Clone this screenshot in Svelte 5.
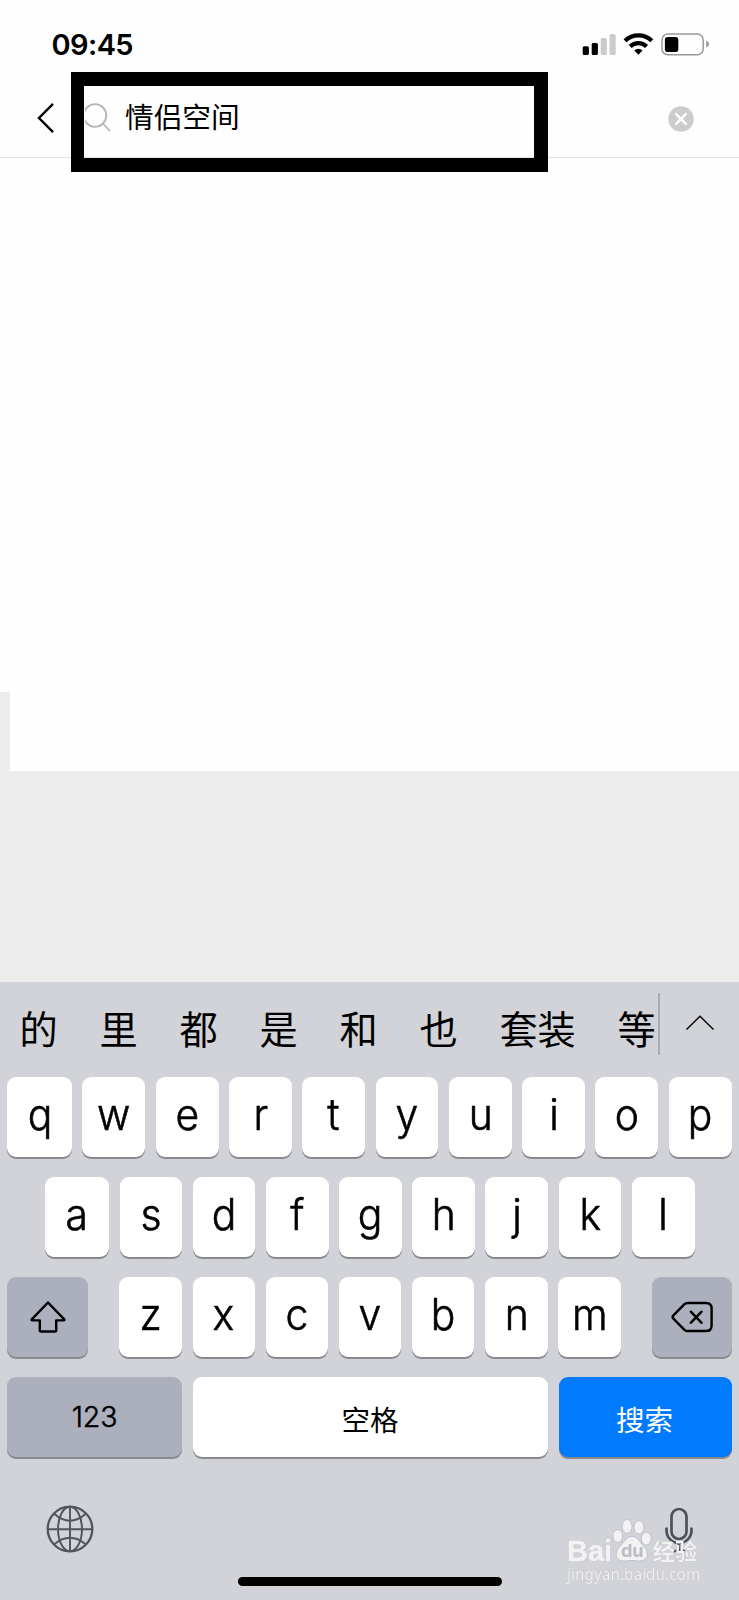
<script>
  const candidates = ['的', '里', '都', '是', '和', '也', '套装', '等'];
  const topRow = [...'qwertyuiop'];
  const midRow = [...'asdfghjkl'];
  const lowRow = [...'zxcvbnm'];
</script>

<div class="screen">
  <header class="status">
    <span class="time">09:45</span>
    <svg class="signals" width="128" height="24" viewBox="0 0 128 24">
      <g>
        <rect x="0.7" y="13.3" width="6.2" height="8.6" rx="1.5" />
        <rect x="9.7" y="10" width="6.2" height="11.9" rx="1.5" />
        <rect x="18.7" y="5" width="6.2" height="16.9" rx="1.5" fill="#ccc" />
        <rect x="27.5" y="1" width="6.2" height="20.9" rx="1.5" fill="#ccc" />
      </g>
      <g fill="none" stroke="#000" stroke-width="4.2">
        <path d="M43 7.8 A19.4 19.4 0 0 1 69.8 7.8" />
        <path d="M48.2 13.4 A11.9 11.9 0 0 1 64.6 13.4" />
      </g>
      <path d="M52.3 17.4 A6.2 6.2 0 0 1 60.5 17.4 L56.4 21.7 Z" />
      <rect x="80" y="1.1" width="41.2" height="20.6" rx="5.8" fill="none" stroke="#999" stroke-width="1.5" />
      <rect x="82.9" y="3.9" width="13.4" height="15.2" rx="2.8" />
      <path d="M124.2 7.6 Q127 8.7 127 11.2 Q127 13.7 124.2 14.8 Z" fill="#999" />
    </svg>
  </header>

  <div class="searchbar">
    <svg class="back" width="18" height="32" viewBox="0 0 18 32">
      <path d="M16 1.8 L2 16 L16 30.2" fill="none" stroke="#000" stroke-width="2.4" />
    </svg>
    <div class="field">
      <svg class="lens" width="28" height="30" viewBox="0 0 28 30">
        <circle cx="10" cy="12.5" r="11.3" />
        <path d="M17.8 20.5 L25 28" />
      </svg>
      <span class="query">情侣空间</span>
    </div>
    <svg class="clear" width="26" height="26" viewBox="0 0 26 26">
      <circle cx="13" cy="13" r="12.7" fill="#ccc" />
      <path d="M8.2 8.2 L17.8 17.8 M17.8 8.2 L8.2 17.8" stroke="#fff" stroke-width="2.6" stroke-linecap="round" />
    </svg>
  </div>

  <main class="results"></main>
  <div class="strip"></div>
  <div class="backdrop"></div>

  <section class="keyboard">
    <div class="candidates">
      <div class="words">
        {#each candidates as word}<span>{word}</span>{/each}
      </div>
      <div class="expand">
        <svg width="30" height="18" viewBox="0 0 30 18">
          <path d="M1.5 15.5 L15 2.3 L28.5 15.5" fill="none" stroke="#111" stroke-width="1.6" />
        </svg>
      </div>
    </div>

    <div class="row top">
      {#each topRow as letter}<div class="key"><span>{letter}</span></div>{/each}
    </div>
    <div class="row mid">
      {#each midRow as letter}<div class="key"><span>{letter}</span></div>{/each}
    </div>
    <div class="row low">
      <div class="key dark">
        <svg class="shift" width="38" height="34" viewBox="0 0 38 34">
          <path d="M19 2.5 L35.3 19.3 Q35.8 20.4 34.6 20.4 H27.2 V30.2 Q27.2 31.5 25.9 31.5 H12.1 Q10.8 31.5 10.8 30.2 V20.4 H3.4 Q2.2 20.4 2.7 19.3 Z" fill="none" stroke="#000" stroke-width="2.4" stroke-linejoin="round" />
        </svg>
      </div>
      <div class="letters">
        {#each lowRow as letter}<div class="key"><span>{letter}</span></div>{/each}
      </div>
      <div class="key dark">
        <svg width="44" height="34" viewBox="0 0 44 34">
          <g fill="none" stroke="#000" stroke-width="2.4" stroke-linejoin="round" stroke-linecap="round">
            <path d="M17.5 3 H36 Q41.6 3 41.6 8.6 V25.4 Q41.6 31 36 31 H17.5 Q15.8 31 14.5 29.8 L3.4 18.7 Q1.8 17 3.4 15.3 L14.5 4.2 Q15.8 3 17.5 3 Z" />
            <path d="M20.8 11.7 L31.6 22.8 M31.6 11.7 L20.8 22.8" />
          </g>
        </svg>
      </div>
    </div>
    <div class="row bottom">
      <div class="key dark digits"><span>123</span></div>
      <div class="key label"><span>空格</span></div>
      <div class="key label search"><span>搜索</span></div>
    </div>

    <div class="tools">
      <svg width="48" height="48" viewBox="0 0 48 48" fill="none" stroke="#50555c" stroke-width="1.9">
        <circle cx="24" cy="24" r="22.3" stroke-width="2.3" />
        <path d="M24 1.5 V46.5 M1.5 24.3 H46.5" />
        <ellipse cx="24" cy="24" rx="12" ry="22.3" />
        <path d="M8.5 9 Q24 22.5 39.5 9 M8.5 39 Q24 26.5 39.5 39" />
      </svg>
      <svg width="28" height="46" viewBox="0 0 28 46" fill="none" stroke="#4c515b" stroke-width="2.7">
        <rect x="6.5" y="2" width="15" height="30" rx="7.5" />
        <path d="M1.5 20.5 V23.5 A12.5 12.5 0 0 0 26.5 23.5 V20.5 M14 36 V43.5 M8 44 H20" />
      </svg>
    </div>
    <div class="home"></div>
  </section>

  <div class="watermark">
    <div class="brand">
      <span class="bai">Bai</span>
      <span class="paw">
        <svg width="40" height="43" viewBox="0 0 40 43" fill="#f2f2f3" stroke="#b8b9c0" stroke-width="0.8">
          <ellipse cx="5.7" cy="17" rx="4.9" ry="6.4" />
          <ellipse cx="15" cy="7.5" rx="5" ry="6.9" />
          <ellipse cx="27" cy="8.3" rx="5" ry="6.7" />
          <ellipse cx="34.3" cy="19.6" rx="5" ry="6.4" />
          <path d="M20 17.5 C26 17.5 27.5 23 31.5 27 C37.5 32.5 36.5 42 28 42 C24 42 23 41.6 20 41.6 C17 41.6 15 42 11.5 42 C2.5 42 2.5 32.5 7.5 28 C12 24 13.5 17.5 20 17.5 Z" />
        </svg>
        <span class="du">du</span>
      </span>
      <span class="jingyan">经验</span>
    </div>
    <div class="url">jingyan.baidu.com</div>
  </div>
</div>

<style>
  :global(body) { margin: 0; background: #fff; }
  .screen {
    position: relative;
    display: flex;
    flex-direction: column;
    width: 739px;
    height: 1600px;
    overflow: hidden;
    background: #fefefe;
    color: #000;
    font-family: Inter, "Noto Sans CJK SC", sans-serif;
  }
  svg { display: block; flex: none; }
  .status {
    display: flex;
    justify-content: space-between;
    align-items: flex-start;
    height: 72px;
    box-sizing: border-box;
    padding: 33px 29px 0 51.5px;
  }
  .time { font-size: 29px; line-height: 24px; font-weight: 600; letter-spacing: -0.6px; }
  .searchbar {
    display: flex;
    align-items: flex-start;
    height: 86px;
    box-sizing: border-box;
    border-bottom: 1px solid #e2e2e2;
  }
  .back { margin: 30px 16px 0 37px; }
  .field {
    display: flex;
    box-sizing: border-box;
    width: 477px;
    height: 100.4px;
    border: 14px solid #000;
    border-width: 14px 14px 14px 13px;
    background: linear-gradient(#fefefe 71px, #e2e2e2 71px);
  }
  .lens { margin: 17px 0 0 1px; fill: none; stroke: #b5b5b5; stroke-width: 1.8; }
  .query {
    margin: 9px 0 0 12px;
    font: 400 28.7px/42px "Noto Sans CJK SC", sans-serif;
  }
  .clear { margin: 34px 0 0 119.5px; }
  .results { height: 534px; }
  .strip { height: 78.5px; box-sizing: border-box; border-left: 10px solid #ececec; }
  .backdrop { height: 211.5px; background: #ececec; }
  .keyboard {
    display: flex;
    flex-direction: column;
    height: 618px;
    background: #d1d3d9;
  }
  .candidates { display: flex; height: 95px; }
  .words {
    display: flex;
    gap: 41.8px;
    box-sizing: border-box;
    width: 660px;
    height: 62px;
    margin-top: 11px;
    padding: 5px 0 0 19.5px;
    border-right: 2px solid #aaacb1;
    font: 400 38.2px/60px "Noto Sans CJK SC", sans-serif;
    white-space: nowrap;
  }
  .expand { margin: 32px 0 0 25px; }
  .row { display: grid; height: 80px; margin-bottom: 20px; }
  .top { grid-template-columns: 65px repeat(9, 62.9px); column-gap: 10.4px; padding-left: 7px; }
  .mid { grid-template-columns: 64px repeat(8, 62.7px); column-gap: 10.5px; padding-left: 45px; }
  .low { grid-template-columns: 80.7px 502px 80px; column-gap: 31px; padding-left: 7px; }
  .letters { display: grid; grid-template-columns: repeat(7, 62.7px); column-gap: 10.4px; padding-left: 0.8px; }
  .bottom { grid-template-columns: 175.3px 355.5px 173px; column-gap: 10.4px; padding-left: 7px; }
  .key {
    display: flex;
    align-items: center;
    justify-content: center;
    height: 80px;
    border-radius: 9px;
    background: #fff;
    box-shadow: 0 2px 0 #898a8e;
    font-size: 43px;
    line-height: 50px;
    font-weight: 300;
  }
  .key span { margin-top: -7px; }
  .shift { margin-left: 2px; }
  .top span, .mid span, .letters span {
    transform: scaleX(0.95);
    -webkit-text-stroke: 0.6px #000;
  }
  .dark { background: #abb0bc; }
  .key.digits { font-size: 28.5px; -webkit-text-stroke: 0.5px #000; }
  .digits span { margin-top: -1px; }
  .key.label { font-family: "Noto Sans CJK SC", sans-serif; font-size: 28.5px; font-weight: 400; }
  .label span { margin: 3px 1px 0 0; }
  .search { background: #007aff; color: #fff; }
  .tools {
    display: flex;
    justify-content: space-between;
    height: 72px;
    padding: 28px 46px 0;
  }
  .tools svg:last-child { margin-top: 2px; }
  .home { width: 264px; height: 9px; margin: 0 auto; border-radius: 5px; background: #000; }
  .watermark {
    position: absolute;
    left: 567px;
    top: 1520px;
    width: 134px;
    color: #f2f2f3;
  }
  .brand { display: flex; height: 42px; align-items: flex-end; }
  .bai {
    width: 45px;
    font: 700 29px/30px "Liberation Sans", sans-serif;
    margin-bottom: -4px;
    -webkit-text-stroke: 0.8px #f2f2f3;
    filter: drop-shadow(0 0 0.7px #95969e);
  }
  .paw { position: relative; }
  .du {
    position: absolute;
    left: 9px;
    top: 22px;
    color: #bbbcc2;
    font: 700 18px/20px Inter, sans-serif;
  }
  .jingyan {
    margin: 0 0 -1px 0.5px;
    font: 700 22.5px/26px "Noto Sans CJK SC", sans-serif;
    filter: drop-shadow(0 0 0.7px #95969e);
  }
  .url {
    margin-top: 3px;
    font: 400 15.4px/20px "Noto Sans", sans-serif;
    filter: drop-shadow(0 0 0.6px #a5a6ae);
  }
</style>
